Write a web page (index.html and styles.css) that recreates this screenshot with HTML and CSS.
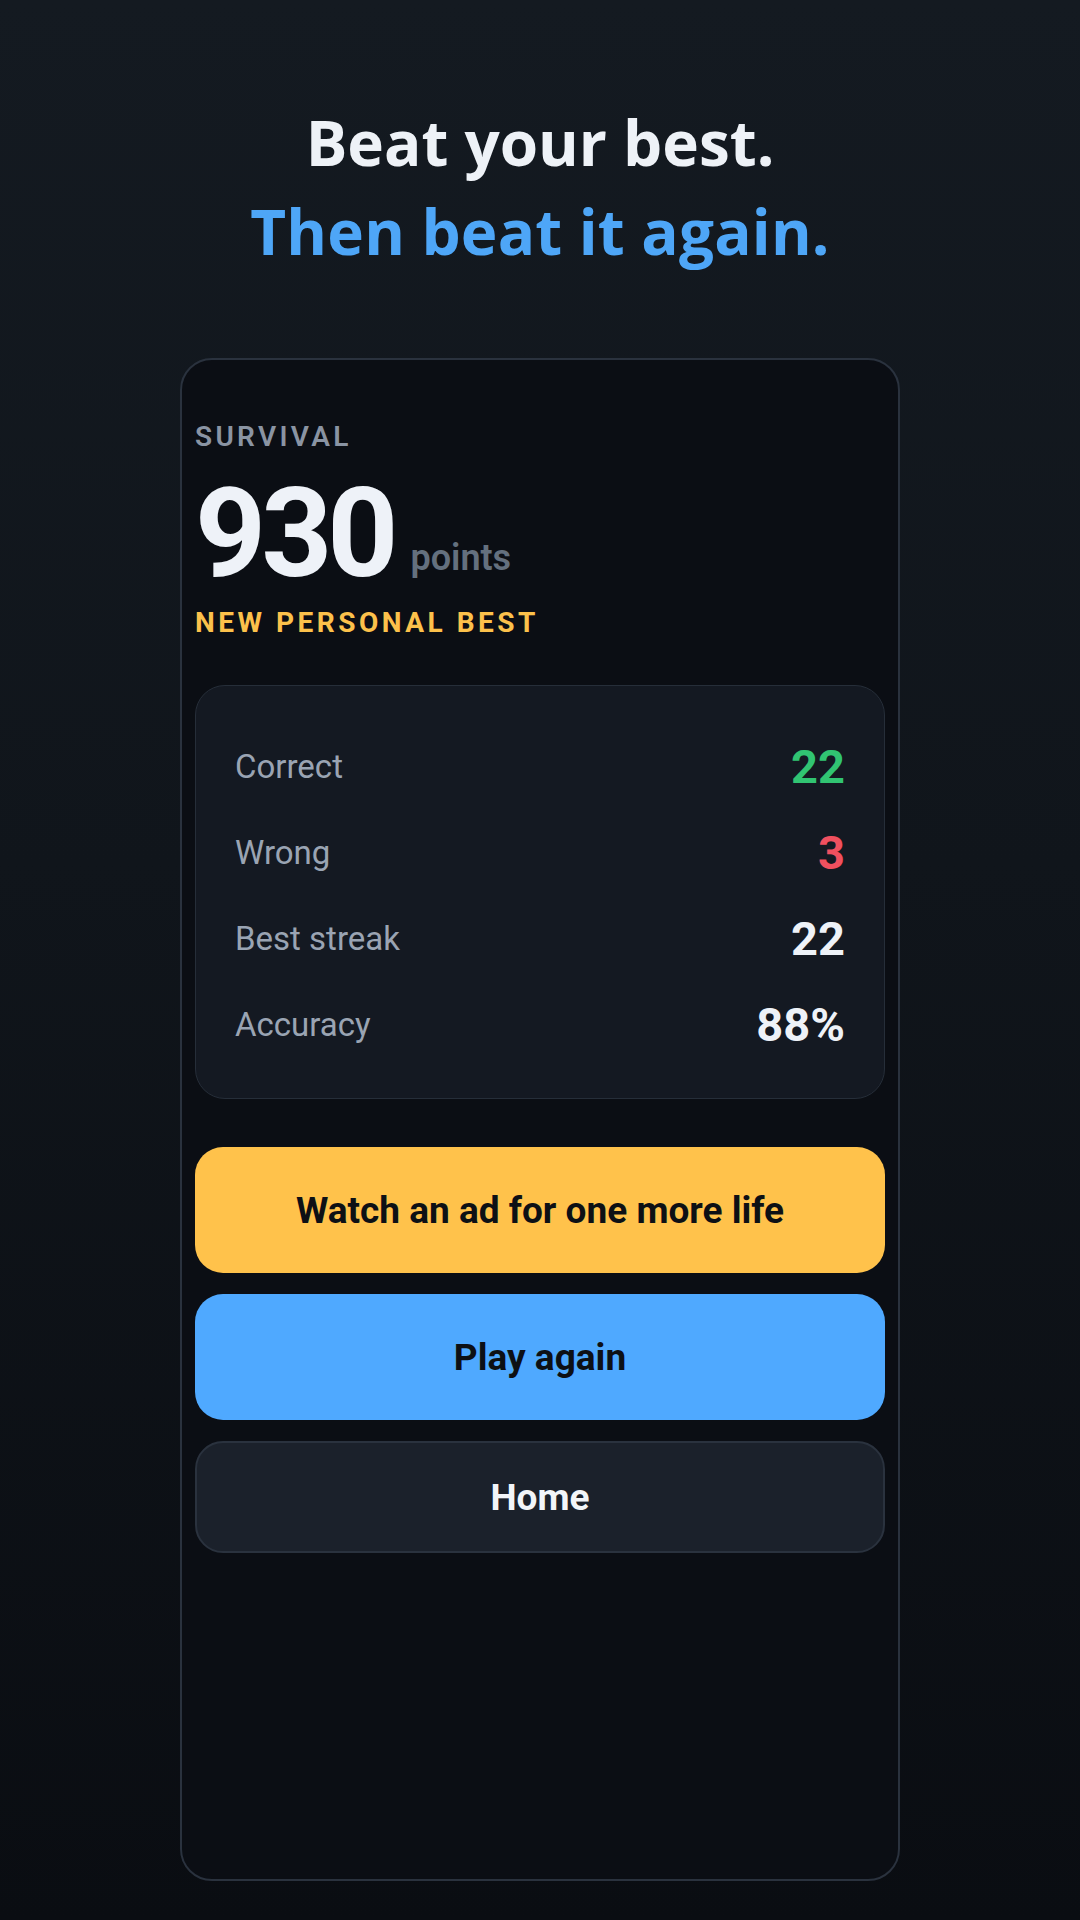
FILE: index.html
```html
<!DOCTYPE html>
<html lang="en">
<head>
<meta charset="utf-8">
<title>Beat your best</title>
<link rel="stylesheet" href="styles.css">
</head>
<body>
<main class="page">
  <header class="hero">
    <h1 class="hero-title">
      <span class="hero-line">Beat your best.</span>
      <span class="hero-line hero-accent">Then beat it again.</span>
    </h1>
  </header>
  <section class="phone">
    <div class="mode">SURVIVAL</div>
    <div class="score"><span class="score-num">930</span><span class="points">points</span></div>
    <div class="best">NEW PERSONAL BEST</div>
    <div class="stats">
      <div class="stat-row"><span class="stat-label">Correct</span><span class="stat-value good">22</span></div>
      <div class="stat-row"><span class="stat-label">Wrong</span><span class="stat-value bad">3</span></div>
      <div class="stat-row"><span class="stat-label">Best streak</span><span class="stat-value">22</span></div>
      <div class="stat-row"><span class="stat-label">Accuracy</span><span class="stat-value">88%</span></div>
    </div>
    <div class="actions">
      <button class="btn btn-ad">Watch an ad for one more life</button>
      <button class="btn btn-play">Play again</button>
      <button class="btn btn-home">Home</button>
    </div>
  </section>
</main>
</body>
</html>
```
FILE: styles.css
```css
* { box-sizing: border-box; }
html, body { margin: 0; padding: 0; }
body {
  width: 1080px;
  height: 1920px;
  background: linear-gradient(180deg, #141a21 0%, #10151b 45%, #0a0d12 100%);
  font-family: Roboto, "Liberation Sans", sans-serif;
  color: #eef2f7;
  overflow: hidden;
}
.page {
  height: 1920px;
  display: flex;
  flex-direction: column;
  align-items: center;
  padding: 98px 0 39px;
}
.hero { text-align: center; }
.hero-title {
  margin: 0;
  font-family: "Open Sans", "Noto Sans", sans-serif;
  font-weight: 700;
  font-size: 62px;
  line-height: 89px;
  letter-spacing: 0;
}
.hero-line { display: block; color: #eef2f7; }
.hero-accent { color: #4ea6f7; letter-spacing: 0.2px; }

.phone {
  margin-top: 82px;
  width: 720px;
  flex: 1;
  border: 2px solid #2a323e;
  border-radius: 32px;
  background: #0b0e14;
  padding: 60px 13px 0;
}
.mode {
  font-size: 28px;
  line-height: 34px;
  font-weight: 600;
  letter-spacing: 3.3px;
  color: #8a94a3;
}
.score {
  margin-top: 18px;
  line-height: 124px;
  height: 124px;
  white-space: nowrap;
}
.score-num {
  font-size: 124px;
  font-weight: 700;
  letter-spacing: -5px;
  color: #eef2f8;
}
.points {
  font-size: 36px;
  line-height: 36px;
  font-weight: 600;
  color: #64707e;
  margin-left: 17px;
  vertical-align: 6px;
}
.best {
  margin-top: 10px;
  font-size: 28px;
  line-height: 34px;
  font-weight: 700;
  letter-spacing: 3.5px;
  color: #fcc14b;
}
.stats {
  margin-top: 45px;
  border: 1px solid #262e39;
  border-radius: 30px;
  background: #141922;
  padding: 37px 39px 31px;
}
.stat-row {
  height: 86px;
  display: flex;
  justify-content: space-between;
  align-items: center;
}
.stat-label {
  font-size: 33px;
  font-weight: 400;
  color: #9aa4b3;
}
.stat-value {
  font-size: 47px;
  font-weight: 700;
  color: #eef2f8;
}
.stat-value.good { color: #31c472; }
.stat-value.bad { color: #f0505f; }

.actions {
  margin-top: 48px;
  display: flex;
  flex-direction: column;
  gap: 21px;
}
.btn {
  display: block;
  width: 100%;
  border: none;
  font-family: Roboto, "Liberation Sans", sans-serif;
  font-size: 37px;
  font-weight: 700;
  color: #0d1015;
  border-radius: 28px;
  padding: 0;
}
.btn-ad { height: 126px; background: #ffc24b; }
.btn-play { height: 126px; background: #4fa9ff; }
.btn-home {
  height: 112px;
  background: #1b212b;
  border: 2px solid #2a323e;
  color: #f2f5f9;
}
```
